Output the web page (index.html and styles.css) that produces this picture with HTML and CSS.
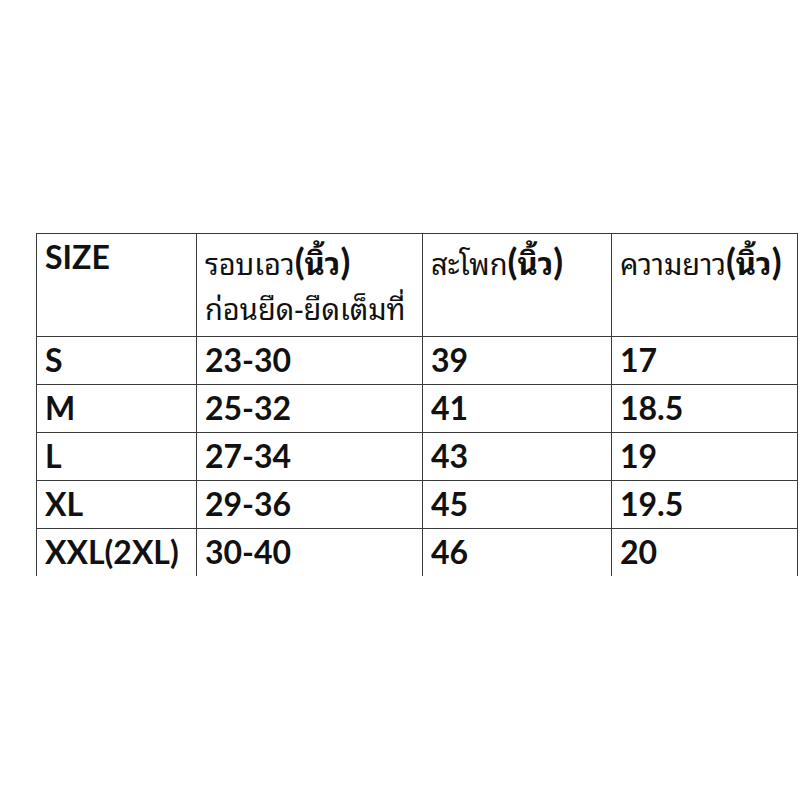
FILE: index.html
```html
<!DOCTYPE html>
<html lang="th">
<head>
<meta charset="utf-8">
<title>Size chart</title>
<link rel="stylesheet" href="styles.css">
</head>
<body>
<table class="chart">
  <colgroup>
    <col class="c1"><col class="c2"><col class="c3"><col class="c4">
  </colgroup>
  <thead>
    <tr class="head">
      <th class="lat">SIZE</th>
      <th class="thcell"><span class="th">รอบเอว</span><b class="lat">(</b><b class="th">นิ้ว</b><b class="lat">)</b><br><span class="th">ก่อนยืด-ยืดเต็มที่</span></th>
      <th class="thcell"><span class="th">สะโพก</span><b class="lat">(</b><b class="th">นิ้ว</b><b class="lat">)</b></th>
      <th class="thcell"><span class="th">ความยาว</span><b class="lat">(</b><b class="th">นิ้ว</b><b class="lat">)</b></th>
    </tr>
  </thead>
  <tbody>
    <tr><td>S</td><td>23-30</td><td>39</td><td>17</td></tr>
    <tr><td>M</td><td>25-32</td><td>41</td><td>18.5</td></tr>
    <tr><td>L</td><td>27-34</td><td>43</td><td>19</td></tr>
    <tr><td>XL</td><td>29-36</td><td>45</td><td>19.5</td></tr>
    <tr class="last"><td>XXL(2XL)</td><td>30-40</td><td>46</td><td>20</td></tr>
  </tbody>
</table>
</body>
</html>
```
FILE: styles.css
```css
html, body {
  margin: 0;
  padding: 0;
  background: #ffffff;
}
body {
  padding-top: 233px;
  padding-left: 36px;
}
.chart {
  border-collapse: collapse;
  width: 761px;
  table-layout: fixed;
  color: #111111;
  font-family: Lato, "Open Sans", sans-serif;
  font-weight: 700;
  font-size: 32px;
}
.c1 { width: 160px; }
.c2 { width: 226px; }
.c3 { width: 189px; }
.c4 { width: 186px; }
.chart th, .chart td {
  border: 1px solid #3a3a3a;
  padding: 0 0 0 8px;
  text-align: left;
  vertical-align: top;
}
.chart td {
  height: 47px;
  line-height: 46px;
}
.head th {
  height: 102px;
  font-weight: 400;
}
.head th.lat {
  font-weight: 700;
  line-height: 46px;
}
.head th.thcell {
  padding-top: 5px;
  height: 97px;
}
.th {
  font-family: "Noto Sans Thai Looped", Loma, Garuda, Waree, Tahoma, "Noto Sans Thai", "DejaVu Sans", sans-serif;
  font-size: 29px;
  font-weight: 400;
  line-height: 45px;
}
b.th { font-weight: 700; font-size: 31px; }
b.lat { font-weight: 700; font-family: Lato, sans-serif; font-size: 36px; }
.last td { border-bottom: none; }
```
